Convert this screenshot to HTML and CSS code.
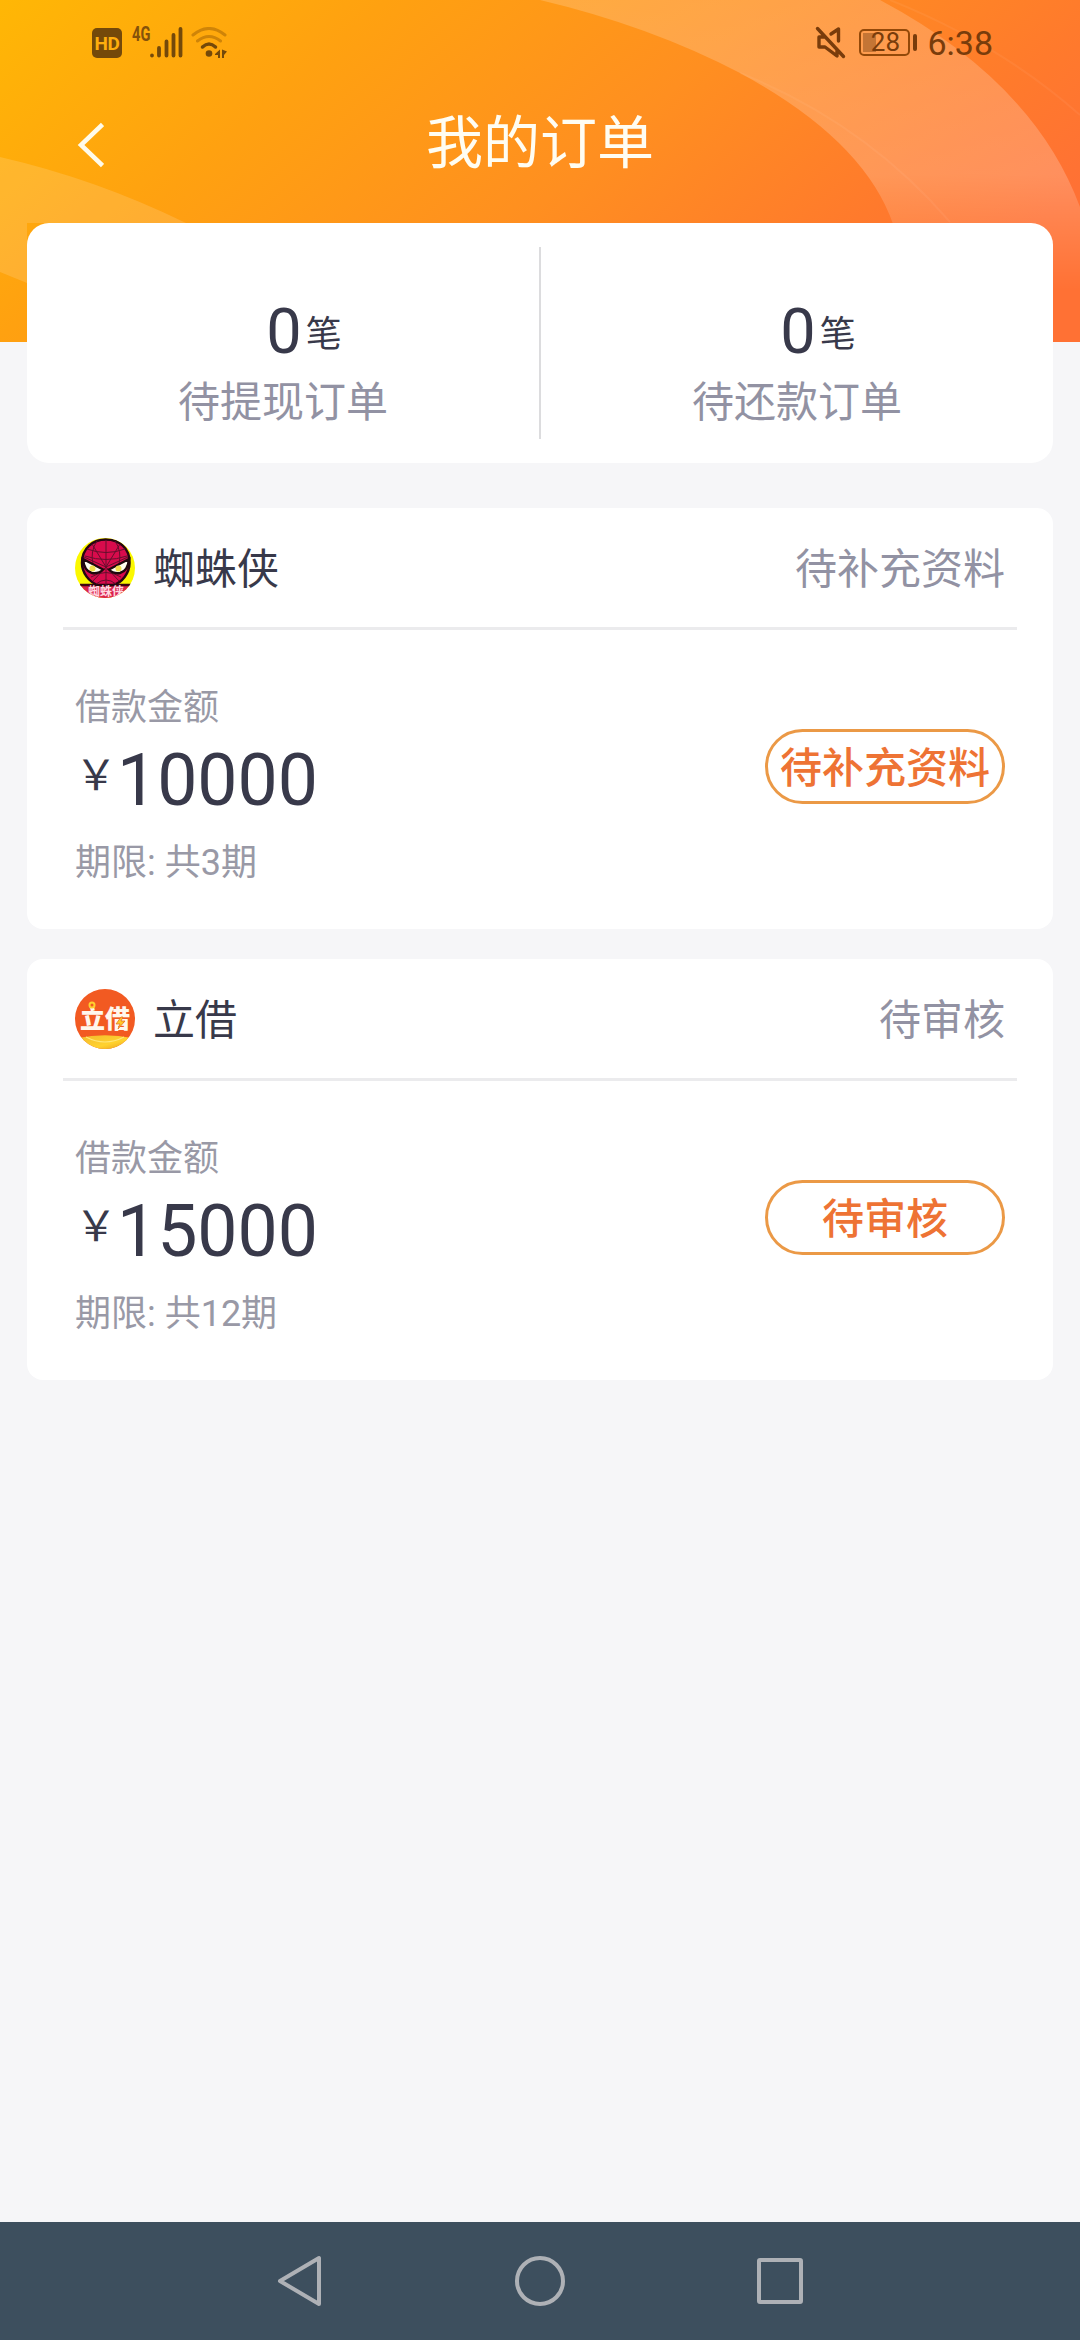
FILE: index.html
```html
<!DOCTYPE html>
<html lang="zh-CN">
<head>
<meta charset="utf-8">
<title>我的订单</title>
<link rel="stylesheet" href="styles.css">
</head>
<body>
<div class="screen">
  <svg class="backdrop" viewBox="0 0 1080 342" aria-hidden="true">
    <defs>
      <linearGradient id="base" gradientUnits="userSpaceOnUse" x1="0" y1="0" x2="556" y2="639">
        <stop offset="0" stop-color="#ffb705"/>
        <stop offset=".3" stop-color="#ffa110"/>
        <stop offset=".6" stop-color="#ff8f20"/>
        <stop offset=".86" stop-color="#ff7a2c"/>
        <stop offset="1" stop-color="#ff7134"/>
      </linearGradient>
      <linearGradient id="band" gradientUnits="userSpaceOnUse" x1="0" y1="0" x2="0" y2="290">
        <stop offset="0" stop-color="#fff" stop-opacity=".18"/>
        <stop offset=".6" stop-color="#fff" stop-opacity=".21"/>
        <stop offset="1" stop-color="#fff" stop-opacity="0"/>
      </linearGradient>
    </defs>
    <rect width="1080" height="342" fill="url(#base)"/>
    <path d="M540 0Q650 26 740 73Q864 140 893 224V342H1080V207Q1034 82 880 0Z" fill="url(#band)"/>
    <path d="M0 157Q96 179 186 223H27V283L0 272Z" fill="#fff" fill-opacity=".14"/>
    <path d="M890 0Q1000 44 1080 115M740 73Q865 123 950 222" fill="none" stroke="#fff" stroke-opacity=".05" stroke-width="2"/>
  </svg>

  <header class="statusbar">
    <div class="status-left">
      <span class="hd">HD</span>
      <span class="net">4G</span>
      <svg class="signal" width="33" height="32" viewBox="0 0 33 32">
        <path d="M2 28.500V28.500M9 21V28.500M16.500 14.500V28.500M23.500 8V28.500M30.500 2V28.500" stroke="#74490a" stroke-width="3.800" stroke-linecap="round"/>
      </svg>
      <svg class="wifi" width="37" height="34" viewBox="0 0 37 34" fill="none" stroke-linecap="round">
        <path d="M2 8Q18 -5 34 8M6.500 14Q18 5 29.500 14" stroke="#cf8408" stroke-width="3"/>
        <path d="M11.500 20Q18 14 24.500 20" stroke="#74490a" stroke-width="3.500"/>
        <circle cx="18" cy="26.500" r="3.300" fill="#74490a"/>
        <path d="M24 27L29 22.500V31H27V28H24ZM31 22.500L36 24.500L33 28V31H31Z" fill="#74490a"/>
      </svg>
    </div>
    <div class="status-right">
      <svg class="mute" width="31" height="33" viewBox="0 0 31 33" fill="none" stroke="#793c0b" stroke-width="3.400" stroke-linejoin="round" stroke-linecap="round">
        <path d="M2.500 2.500L28.500 30.500M16 8L23.500 3V15M8 11H4V21H10L22 30V24"/>
      </svg>
      <span class="battery">28</span><span class="cap"></span>
      <span class="clock">6:38</span>
    </div>
  </header>

  <div class="titlebar">
    <svg class="back" width="30" height="46" viewBox="0 0 30 46"><path d="M28.500 2.500L7 23L28.500 43.500" fill="none" stroke="#fffbea" stroke-width="4.500"/></svg>
    <h1 class="title">我的订单</h1>
  </div>

  <main class="content">
    <section class="summary">
      <div class="stat"><div class="count"><b class="num">0</b><span class="unit">笔</span></div><div class="label">待提现订单</div></div>
      <div class="stat-divider"></div>
      <div class="stat"><div class="count"><b class="num">0</b><span class="unit">笔</span></div><div class="label">待还款订单</div></div>
    </section>

    <section class="order">
      <div class="order-head">
        <svg class="logo" width="60" height="60" viewBox="0 0 60 60">
          <defs><clipPath id="round"><circle cx="30" cy="30" r="30"/></clipPath></defs>
          <g clip-path="url(#round)">
            <rect width="60" height="60" fill="#fbf800"/>
            <path d="M5 47H56V60H5Z" fill="#db234b"/>
            <path d="M5 47H56" stroke="#3d0711" stroke-width="2.500"/>
            <path d="M31 1.500C44 1.500 55 10 54.500 25C54.500 35 47 45 38 47H23C14 44 7 35 7 25C7 10 18 1.500 31 1.500Z" fill="#d80b4c" stroke="#260711" stroke-width="2.500"/>
            <path d="M31 2V47M31 29L17 6M31 29L45 6M31 29L9 19M31 29L53 19M22 3Q15 13 18 26M40 3Q47 13 44 26M12 11Q31 18 50 11M10 18Q31 25 52 18M16 39Q31 30 46 39M21 46Q31 38 41 46M31 29L18 43M31 29L44 43" fill="none" stroke="#64102d" stroke-width="1"/>
            <path d="M8 21L28 31.500Q24 36 17 35Q9 33 8 21ZM54 21L34 31.500Q38 36 45 35Q53 33 54 21Z" fill="#fffef0" stroke="#20080e" stroke-width="2.500"/>
            <circle cx="17.500" cy="30.500" r="3" fill="#eee04c"/><circle cx="43.500" cy="30.500" r="3" fill="#eee04c"/>
            <text x="31" y="57.500" text-anchor="middle" class="logo-small">蜘蛛侠</text>
          </g>
        </svg>
        <h2 class="name">蜘蛛侠</h2>
        <span class="state">待补充资料</span>
      </div>
      <div class="order-body">
        <div class="details">
          <div class="caption">借款金额</div>
          <div class="amount"><span class="yen">￥</span><span class="value">10000</span></div>
          <div class="caption term">期限: 共3期</div>
        </div>
        <button class="action">待补充资料</button>
      </div>
    </section>

    <section class="order">
      <div class="order-head">
        <svg class="logo" width="60" height="60" viewBox="0 0 60 60">
          <defs>
            <linearGradient id="gold" x1="0" y1="0" x2="1" y2="1"><stop offset="0" stop-color="#f2b92d"/><stop offset=".6" stop-color="#ffd22e"/><stop offset="1" stop-color="#e79a1d"/></linearGradient>
          </defs>
          <g clip-path="url(#round)">
            <rect width="60" height="60" fill="#f25a22"/>
            <path d="M3 49Q30 43.500 57 49V60H3Z" fill="url(#gold)"/>
            <path d="M11 48Q30 58 49 48" fill="none" stroke="#ffe678" stroke-width="1.200"/>
          </g>
          <text x="30" y="38.500" text-anchor="middle" class="logo-large">立借</text>
          <circle cx="17" cy="16" r="2.500" fill="#f25a22" stroke="#ffd02e" stroke-width="2"/>
          <path d="M46 28L41 35H45L43 40L50 32H46L48 28Z" fill="#ffc928" stroke="#e2641c" stroke-width=".7"/>
        </svg>
        <h2 class="name">立借</h2>
        <span class="state">待审核</span>
      </div>
      <div class="order-body">
        <div class="details">
          <div class="caption">借款金额</div>
          <div class="amount"><span class="yen">￥</span><span class="value">15000</span></div>
          <div class="caption term">期限: 共12期</div>
        </div>
        <button class="action">待审核</button>
      </div>
    </section>
  </main>

  <nav class="navbar">
    <svg width="54" height="54" viewBox="0 0 54 54"><path d="M46 4V50L7 27Z"/></svg>
    <svg width="54" height="54" viewBox="0 0 54 54"><circle cx="27" cy="27" r="23"/></svg>
    <svg width="54" height="54" viewBox="0 0 54 54"><rect x="6" y="6" width="42" height="42" rx="1"/></svg>
  </nav>
</div>
</body>
</html>
```
FILE: styles.css
```css
* { box-sizing: border-box; }

body {
  margin: 0;
  background: #f6f6f8;
  font-family: Roboto, "Noto Sans CJK SC", sans-serif;
  color: #38394a;
}

.screen {
  position: relative;
  width: 1080px;
  height: 2340px;
  display: flex;
  flex-direction: column;
  overflow: hidden;
}

.backdrop {
  position: absolute;
  top: 0;
  left: 0;
  width: 1080px;
  height: 342px;
  z-index: -1;
}

svg { display: block; flex: none; }

/* System status bar */
.statusbar {
  height: 84px;
  padding: 0 87px 0 92px;
  display: flex;
  justify-content: space-between;
}

.status-left, .status-right { display: flex; align-items: flex-start; }

.hd {
  width: 30px;
  height: 30px;
  margin-top: 28px;
  border-radius: 5px;
  background: #74490a;
  color: #ffae0d;
  font-size: 19px;
  letter-spacing: -.5px;
  font-weight: 700;
  line-height: 31px;
  text-align: center;
}

.net {
  width: 18px;
  margin: 24px 0 0 10px;
  font: 700 20px/20px Roboto, sans-serif;
  color: #85520a;
  transform: scaleX(.73);
  transform-origin: left;
}

.signal { margin: 27px 0 0 0; }
.wifi { margin: 27px 0 0 8px; }

.mute { margin-top: 26px; }

.battery {
  width: 51px;
  height: 27px;
  margin: 29px 0 0 13px;
  border: 2px solid #934909;
  border-radius: 5px;
  padding-left: 1px;
  background: linear-gradient(#c47535, #c47535) 2px 2px / 13px 19px no-repeat;
  font-size: 26px;
  line-height: 23px;
  text-align: center;
  color: #793c0b;
}

.cap {
  width: 4px;
  height: 17px;
  margin: 34px 0 0 3px;
  border-radius: 2px;
  background: #793c0b;
}

.clock {
  margin: 23px 0 0 10px;
  font-size: 34px;
  line-height: 40px;
  color: #793c0b;
}

/* Page title */
.titlebar {
  height: 139px;
  padding: 0 74px;
  display: grid;
  grid-template-columns: 30px 1fr 30px;
}

.back { margin-top: 38px; }

.title {
  margin: 18px 0 0;
  font-size: 57px;
  line-height: 84px;
  font-weight: 400;
  text-align: center;
  color: #fffdf2;
}

.content {
  flex: 1;
  padding: 0 27px;
  display: flex;
  flex-direction: column;
}

/* Pending totals */
.summary {
  height: 240px;
  margin-bottom: 45px;
  display: grid;
  grid-template-columns: 1fr 2px 1fr;
  background: #fff;
  border-radius: 22px;
}

.stat { padding-top: 73px; text-align: center; }

.stat-divider { margin: 24px 0; background: #dcdcde; }

.count {
  height: 72px;
  padding-left: 42px;
  display: flex;
  align-items: center;
  justify-content: center;
}

.num { font-size: 63px; font-weight: 400; line-height: 72px; }
.unit { font-size: 36px; line-height: 54px; margin: 5px 0 0 4px; }
.label { font-size: 42px; line-height: 62px; margin-top: 4px; color: #9292a3; }

/* Order cards */
.order {
  height: 421px;
  margin-bottom: 30px;
  background: #fff;
  border-radius: 16px;
}

.order-head {
  height: 122px;
  margin: 0 36px;
  padding: 0 12px;
  display: flex;
  align-items: center;
  border-bottom: 3px solid #ebebed;
}

.name {
  margin: 4px 0 0 18px;
  font-size: 42px;
  line-height: 60px;
  font-weight: 400;
}

.state { margin: 4px 0 0 auto; font-size: 42px; line-height: 60px; color: #9292a3; }

.order-body {
  padding: 51px 48px 0;
  display: flex;
  justify-content: space-between;
  align-items: flex-start;
}

.caption { font-size: 36px; line-height: 54px; color: #9999a6; white-space: nowrap; }

.amount {
  height: 84px;
  display: flex;
  align-items: flex-start;
}

.yen {
  font-family: "Noto Sans CJK SC", sans-serif;
  width: 42px;
  font-size: 42px;
  line-height: 60px;
  margin-top: 7px;
}

.value { font-size: 71.500px; line-height: 84px; margin-top: 4px; }
.term { margin-top: 17px; }

.action {
  width: 240px;
  height: 75px;
  margin-top: 48px;
  padding: 5px 0 0;
  border: 3px solid #eb9946;
  border-radius: 38px;
  background: #fff;
  font-family: inherit;
  font-size: 42px;
  font-weight: 500;
  line-height: 64px;
  white-space: nowrap;
  color: #ee7334;
}

.logo-small {
  font: 700 12px "Noto Sans CJK SC", sans-serif;
  fill: #ffd9e1;
}

.logo-large {
  font: 900 25px "Noto Sans CJK SC", sans-serif;
  fill: #fff7ed;
}

/* System navigation */
.navbar {
  height: 118px;
  padding: 0 273px;
  display: flex;
  align-items: center;
  justify-content: space-between;
  background: #3d4f5e;
}

.navbar svg {
  fill: none;
  stroke: #aeb1b6;
  stroke-width: 4;
  stroke-linejoin: round;
}
```
